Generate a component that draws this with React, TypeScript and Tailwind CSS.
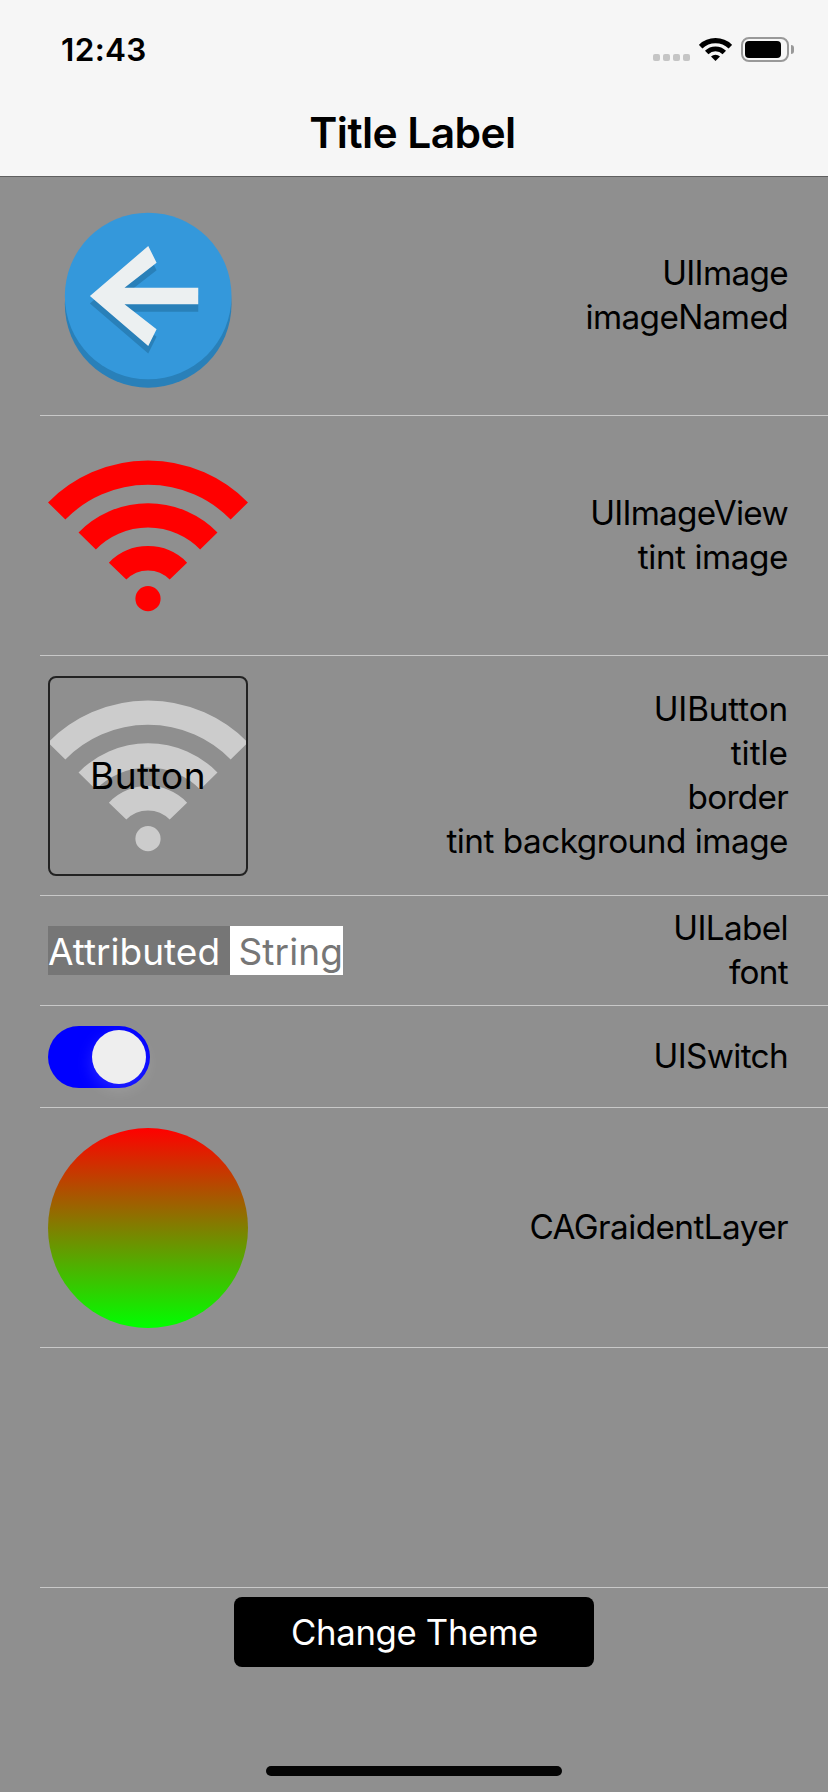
import React from "react";
import type { ReactNode } from "react";

function SignalArcs({ className }: { className: string }) {
  return (
    <svg viewBox="0 0 200 200" className={className} fill="none" stroke="currentColor" strokeWidth="24.3">
      <path d="M8.7 75A128 128 0 0 1 191.3 75" />
      <path d="M39.2 104.9A85.2 85.2 0 0 1 160.8 104.9" />
      <path d="M69.6 135.1A42.4 42.4 0 0 1 130.4 135.1" />
      <circle cx="100" cy="162.7" r="12.6" fill="currentColor" stroke="none" />
    </svg>
  );
}

function BackIcon() {
  const arrow = "M12 6L5 12L12 18L13 16L9.15 13H18V11H9.15L13 8Z";
  return (
    <svg viewBox="0 0 24 24" className="mt-[19.5px] size-[200px]">
      <circle cx="12.02" cy="13" r="10" fill="#2980b9" />
      <circle cx="12.02" cy="12" r="10" fill="#3498db" />
      <path d={arrow} fill="#2980b9" transform="translate(0.03 0.9)" />
      <path d={arrow} fill="#ecf0f1" transform="translate(0.03 0)" />
    </svg>
  );
}

function StatusBar() {
  return (
    <div className="flex h-[88px] items-start pl-[61px] pr-[34px]">
      <span className="mt-[30px] text-[31.5px] leading-[40px] font-semibold tracking-[0.35px]">12:43</span>
      <div className="mt-[37px] ml-auto flex items-start">
        <div className="mt-[17px] flex gap-[3px]">
          {[0, 1, 2, 3].map((dot) => (
            <span key={dot} className="size-[7px] rounded-[2px] bg-[#c5c5c5]" />
          ))}
        </div>
        <svg viewBox="0 0 33 24" className="ml-[9px] h-6 w-[33px]" fill="none" stroke="#000">
          <path d="M1.6 9.7A21.3 21.3 0 0 1 31.4 9.7" strokeWidth="5.2" />
          <path d="M7.7 15.5A12.4 12.4 0 0 1 25.3 15.5" strokeWidth="4.8" />
          <path d="M16.5 24L12 19.6A6.7 6.7 0 0 1 21 19.6Z" fill="#000" stroke="none" />
        </svg>
        <div className="ml-[9px] flex h-[25px] w-12 items-center rounded-[8px] border-2 border-[#999999] pl-[2px]">
          <span className="h-[17px] w-9 rounded-[4px] bg-black" />
        </div>
        <span className="mt-[8px] ml-[2px] h-[9px] w-[3px] rounded-r-full bg-[#999999]" />
      </div>
    </div>
  );
}

function Row({ height, children, labels = [] }: { height: string; children?: ReactNode; labels?: [string, string][] }) {
  return (
    <div className={`ml-10 flex items-start justify-between border-b border-[#c8c8c8] pr-10 pl-2 ${height}`}>
      {children ?? <span />}
      <div className="flex h-full shrink-0 flex-col items-end justify-center pb-px text-[33.3px] leading-[44px]">
        {labels.map(([text, tracking]) => (
          <span key={text} className={`block whitespace-nowrap ${tracking}`}>
            {text}
          </span>
        ))}
      </div>
    </div>
  );
}

export default function App() {
  return (
    <div className="flex h-[1792px] w-[828px] flex-col overflow-hidden bg-[#8f8f8f] font-['Inter',sans-serif] text-black">
      <header className="z-10 h-[176px] bg-[#f6f6f6] shadow-[0_1px_0_#5f5f5f]">
        <StatusBar />
        <h1 className="mt-[19px] pr-[3px] text-center text-[42.6px] leading-[52px] font-semibold tracking-[-0.6px]">
          Title Label
        </h1>
      </header>

      <main>
        <Row height="h-[240px]" labels={[["UIImage", "tracking-[-0.65px]"], ["imageNamed", "tracking-[-0.6px]"]]}>
          <BackIcon />
        </Row>
        <Row height="h-[240px]" labels={[["UIImageView", "tracking-[-0.72px]"], ["tint image", "tracking-[-0.45px]"]]}>
          <SignalArcs className="mt-5 size-[200px] text-[#ff0000]" />
        </Row>
        <Row
          height="h-[240px]"
          labels={[
            ["UIButton", "tracking-[-0.15px]"],
            ["title", "tracking-[0px]"],
            ["border", "tracking-[-0.7px]"],
            ["tint background image", "tracking-[-0.5px]"],
          ]}
        >
          <button className="mt-5 grid size-[200px] place-items-center">
            <SignalArcs className="col-start-1 row-start-1 size-[200px] text-[#cccccc]" />
            <span className="z-10 col-start-1 row-start-1 flex size-[200px] items-center justify-center rounded-[8px] border-2 border-[#222222] text-[37px] tracking-[0.5px]">
              Button
            </span>
          </button>
        </Row>
        <Row height="h-[110px]" labels={[["UILabel", "tracking-[-0.62px]"], ["font", "tracking-[-0.7px]"]]}>
          <div className="mt-[30px] flex text-[37px] leading-[51px]">
            <span className="h-[49px] w-[182px] bg-[#767676] text-white">Attributed</span>
            <span className="h-[49px] w-[113px] bg-white pl-[8.5px] tracking-[0.1px] text-[#767676]">String</span>
          </div>
        </Row>
        <Row height="h-[102px]" labels={[["UISwitch", "tracking-[-0.65px]"]]}>
          <button className="mt-5 flex h-[62px] w-[102px] items-center justify-end rounded-full bg-[#0000ff] pr-1">
            <span className="size-[54px] rounded-full bg-[#eeeeee] shadow-[0_6px_16px_rgba(255,255,255,0.15)]" />
          </button>
        </Row>
        <Row height="h-[240px]" labels={[["CAGraidentLayer", "tracking-[-0.57px]"]]}>
          <div className="mt-5 size-[200px] rounded-full bg-[linear-gradient(#ff0000,#00ff00)]" />
        </Row>
        <Row height="h-[240px]" />
      </main>

      <footer className="flex flex-1 flex-col items-center justify-between pt-[9px] pb-4">
        <button className="flex h-[70px] w-[360px] items-center justify-center rounded-[8px] bg-black pl-px text-[34.7px] tracking-[-0.33px] text-white">
          Change Theme
        </button>
        <div className="h-[10px] w-[296px] rounded-full bg-[#050505]" />
      </footer>
    </div>
  );
}
